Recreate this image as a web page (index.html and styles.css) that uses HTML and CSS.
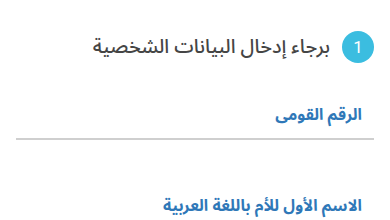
FILE: index.html
```html
<!DOCTYPE html>
<html lang="ar" dir="rtl">
<head>
    <meta charset="UTF-8">
    <meta name="viewport" content="width=device-width, initial-scale=1.0">
    <title>البيانات الشخصية</title>
    <link rel="stylesheet" href="styles.css">
</head>
<body>
    <div class="container">
        <!-- Step header -->
        <div class="step-header">
            <span class="step-num">1</span>
            <h2>برجاء إدخال البيانات الشخصية</h2>
        </div>

        <!-- National ID -->
        <div class="form-group first">
            <label for="nationalId">الرقم القومى</label>
            <input type="text" id="nationalId" name="nationalId">
        </div>

        <!-- Mother's first name -->
        <div class="form-group">
            <label for="motherName">الاسم الأول للأم باللغة العربية</label>
            <input type="text" id="motherName" name="motherName">
        </div>
    </div>
</body>
</html>
```

FILE: styles.css
```css
* {
    margin: 0;
    padding: 0;
    box-sizing: border-box;
}

body {
    font-family: "Noto Sans Arabic", "DejaVu Sans", sans-serif;
    background-color: #fff;
    color: #444;
}

.container {
    padding: 31px 16px 0 16px;
}

.step-header {
    display: flex;
    align-items: center;
    gap: 12px;
    height: 32px;
}

.step-num {
    width: 32px;
    height: 32px;
    border-radius: 50%;
    background-color: #3bbde0;
    color: white;
    font-family: "Roboto", sans-serif;
    font-size: 17px;
    display: flex;
    align-items: center;
    justify-content: center;
}

.step-header h2 {
    font-size: 19.5px;
    line-height: 32px;
    font-weight: 500;
    color: #454545;
}

.form-group {
    margin-top: 54px;
}

.form-group.first {
    margin-top: 40px;
}

label {
    display: block;
    padding-right: 12px;
    font-size: 16px;
    line-height: 24px;
    font-weight: bold;
    color: #2f78b8;
}

input {
    display: block;
    width: 100%;
    height: 13px;
    border: none;
    border-bottom: 2px solid #cfcfcf;
    outline: none;
    background: transparent;
}
```
